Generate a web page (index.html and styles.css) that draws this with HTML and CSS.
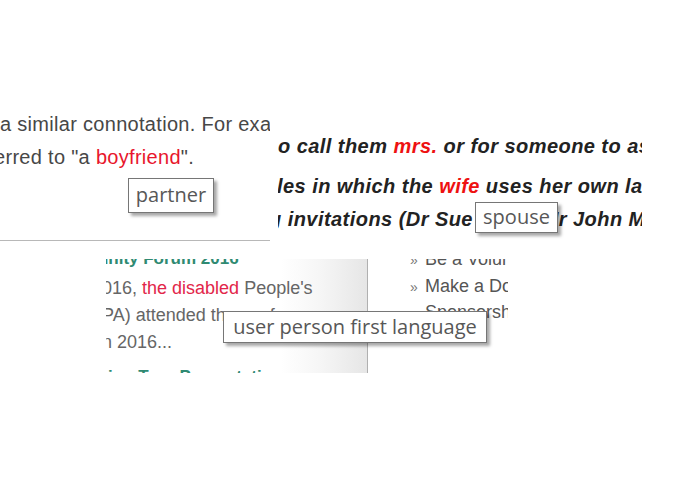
FILE: index.html
```html
<!DOCTYPE html>
<html>
<head>
<meta charset="utf-8">
<link rel="stylesheet" href="styles.css">
</head>
<body>
<div class="canvas">
  <section class="clip clip-one">
    <div class="p1-line">a similar connotation. For example, a man</div>
    <div class="p1-line second">erred to "a <span class="hl">boyfriend</span>".</div>
    <div class="p1-rule"></div>
  </section>

  <section class="clip clip-two">
    <div class="p2-line l1">o call them <span class="hl2">mrs.</span> or for someone to ask</div>
    <div class="p2-line l2">les in which the <span class="hl2">wife</span> uses her own last name</div>
    <div class="p2-line l3">g invitations (Dr Sue Lee &amp; Mr John Marks)</div>
  </section>

  <section class="clip clip-three">
    <div class="p3-left">
      <div class="p3-head top">Community Forum 2016</div>
      <div class="p3-text first">016, <span class="hl3">the disabled</span> People's</div>
      <div class="p3-text">PA) attended the conference</div>
      <div class="p3-text">n 2016...</div>
      <div class="p3-head bottom">ion Tour Presentation</div>
    </div>
    <div class="p3-shade"></div>
    <ul class="p3-list">
      <li><span class="raquo">»</span>Be a Volunteer</li>
      <li><span class="raquo">»</span>Make a Donation /</li>
      <li><span class="raquo"></span>Sponsorship</li>
    </ul>
  </section>

  <div class="tip tip-partner">partner</div>
  <div class="tip tip-spouse">spouse</div>
  <div class="tip tip-user">user person first language</div>
</div>
</body>
</html>
```

FILE: styles.css
```css
html, body {
  margin: 0;
  padding: 0;
  background: #ffffff;
}

.canvas {
  position: relative;
  width: 695px;
  height: 494px;
  overflow: hidden;
  font-family: "Liberation Sans", Arial, sans-serif;
}

.clip {
  position: absolute;
  overflow: hidden;
  white-space: nowrap;
}

/* clip one */
.clip-one {
  left: 0;
  top: 108px;
  width: 270px;
  height: 135px;
}
.p1-line {
  font-size: 20px;
  line-height: 33px;
  color: #474747;
  letter-spacing: 0.3px;
}
.p1-line.second { margin-left: -6px; }
.hl { color: #e8162c; }
.p1-rule {
  margin-top: 66px;
  height: 0;
  border-top: 1px solid #b8b8b8;
}

/* clip two */
.clip-two {
  left: 278px;
  top: 131px;
  width: 364px;
  height: 110px;
}
.p2-line {
  font-size: 20px;
  font-weight: bold;
  font-style: italic;
  color: #222222;
  letter-spacing: 0.45px;
}
.p2-line.l1 { line-height: 30px; }
.p2-line.l2 { line-height: 33px; margin-top: 9px; margin-left: -1px; }
.p2-line.l3 { line-height: 33px; margin-left: -9px; }
.hl2 { color: #ee1111; }

/* clip three */
.clip-three {
  left: 106px;
  top: 259px;
  width: 402px;
  height: 114px;
  display: flex;
}
.p3-left {
  width: 261px;
  flex: none;
  position: relative;
  z-index: 1;
}
.p3-head {
  font-size: 17px;
  font-weight: bold;
  line-height: 20px;
  color: #2f8a72;
}
.p3-head.top { margin-top: -10px; margin-left: -61px; }
.p3-head.bottom { margin-top: 11px; margin-left: 2px; }
.p3-text {
  font-size: 18px;
  line-height: 27px;
  color: #666666;
  margin-left: -4px;
}
.p3-text.first { margin-top: 6px; }
.hl3 { color: #e2264a; }
.p3-shade {
  flex: none;
  width: 86px;
  margin-left: -86px;
  margin-top: -1px;
  background: linear-gradient(to right, rgba(255,255,255,0) 0%, #f6f6f6 45%, #e6e6e6 100%);
  border-right: 1px solid #b0b0b0;
}
.p3-list {
  list-style: none;
  margin: -12px 0 0 42px;
  padding: 0;
  font-size: 18px;
  line-height: 25.5px;
  color: #555555;
}
.raquo {
  display: inline-block;
  width: 15px;
  font-size: 14px;
  color: #777777;
}

/* tooltips */
.tip {
  position: absolute;
  box-sizing: border-box;
  display: flex;
  align-items: center;
  justify-content: center;
  background: #ffffff;
  border: 1px solid #767676;
  box-shadow: 3px 3px 3px rgba(0, 0, 0, 0.35);
  font-family: "Open Sans", "Noto Sans", sans-serif;
  font-size: 20px;
  color: #575757;
  white-space: nowrap;
  z-index: 5;
}
.tip-partner {
  left: 128px;
  top: 178px;
  width: 86px;
  height: 35px;
  padding-bottom: 2px;
}
.tip-spouse {
  left: 475px;
  top: 202px;
  width: 83px;
  height: 31px;
  padding-bottom: 2px;
}
.tip-user {
  left: 223px;
  top: 311px;
  width: 264px;
  height: 32px;
  padding-bottom: 2px;
}
```
